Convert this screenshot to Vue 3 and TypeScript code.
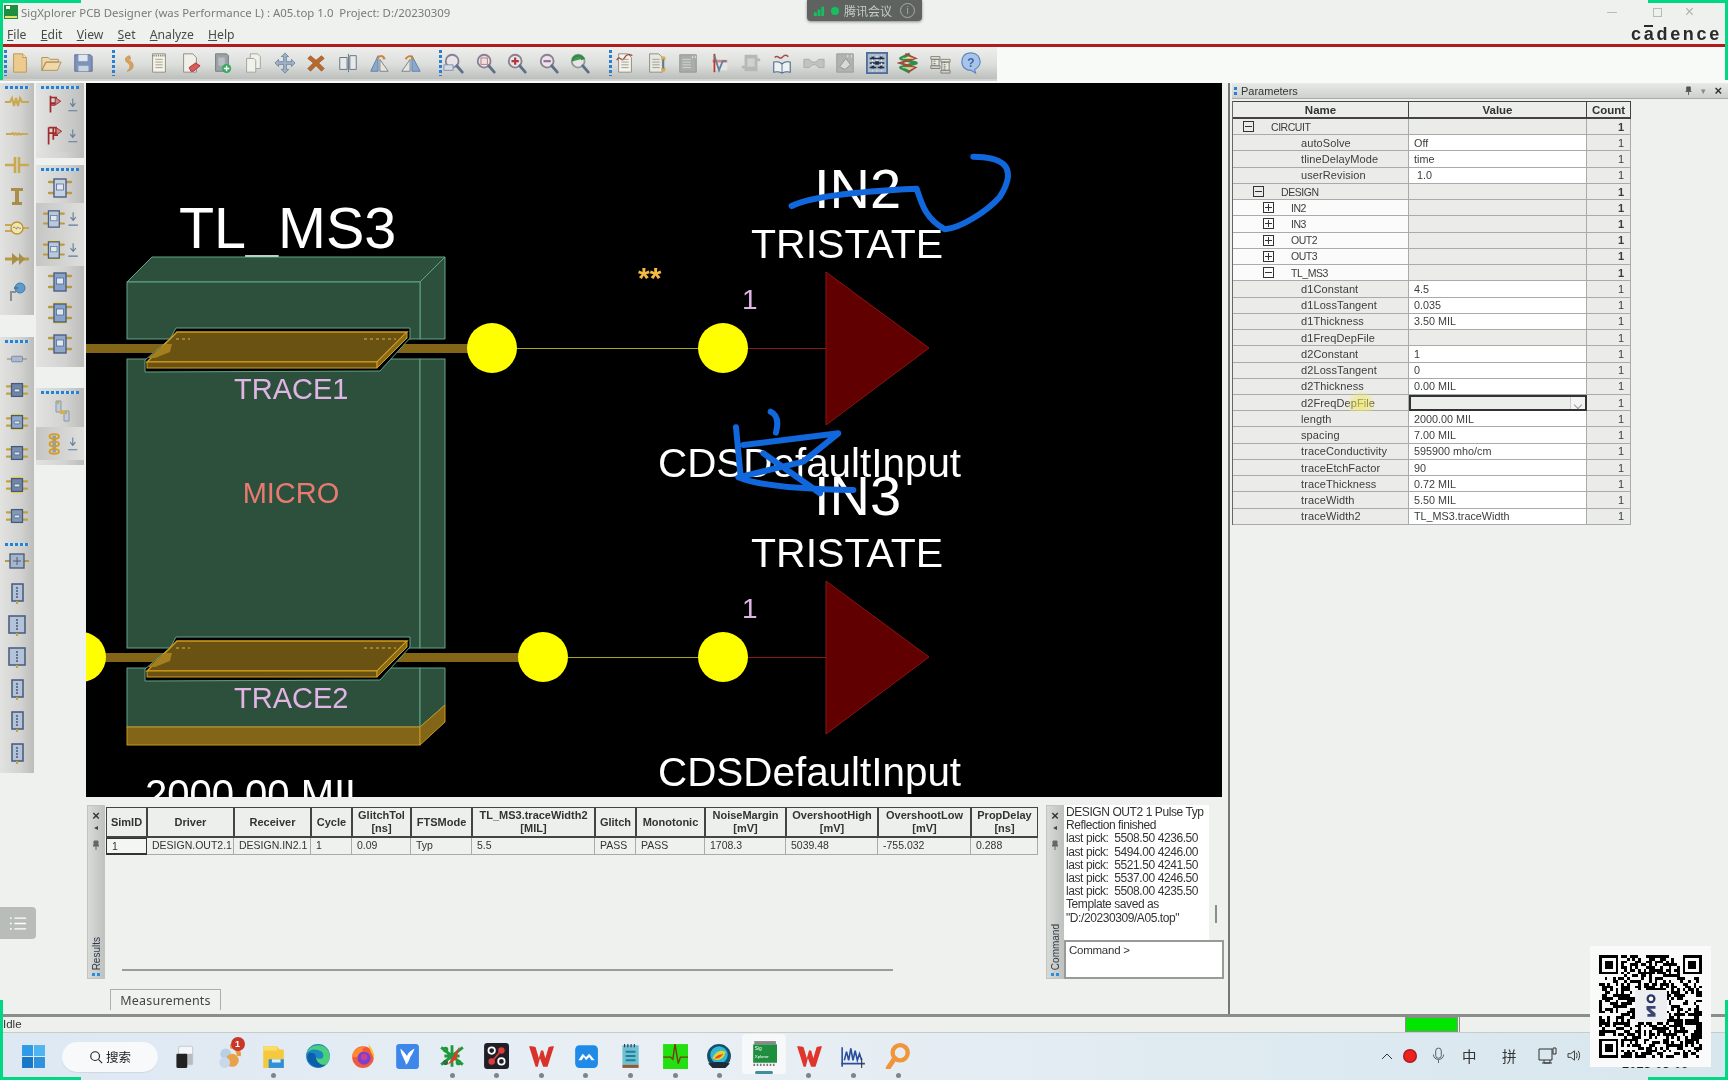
<script setup lang="ts">
const chipBlue = '#7d94b8'
const mag = (inner: string, c = '#8a7f92') =>
  `<circle cx="10" cy="10" r="7" fill="#e8e4e8" stroke="${c}" stroke-width="2"/><path d="M15 15l6 7" stroke="#5f6f8a" stroke-width="3" stroke-linecap="round"/>${inner}`
const doc = (extra = '', fill = '#f4f2ea', stroke = '#8a8a80') =>
  `<path d="M5 2h10l4 4v16H5z" fill="${fill}" stroke="${stroke}"/>${extra}`
const lines = '<path d="M8 8h8M8 11h8M8 14h8M8 17h8" stroke="#9a9a90"/>'

const toolbar: string[][] = [
  [
    '<path d="M5 2h10l4 4v16H5z" fill="#eccb8e" stroke="#b89558"/><path d="M15 2v4h4" fill="#f8e4b8" stroke="#b89558"/>',
    '<path d="M2 20V6h7l2 2h9v3H7L2 20l4-9h17l-4 9z" fill="#f0d8a8" stroke="#b08f5c"/>',
    `<path d="M3 3h17l2 2v16H3z" fill="${chipBlue}" stroke="#5d6f90"/><path d="M7 3h10v7H7z" fill="#dfe6f0"/><path d="M7 15h11v6H7z" fill="#c8d2e2"/>`
  ],
  [
    '<path d="M15 4C9 5 9 10 13 12c3 2 3 6-1 9 6-1 8-5 6-9-2-3-5-3-4-5l2 1z" fill="#d9a05e" stroke="#b9813d" stroke-width=".6"/>',
    '<path d="M5 2h14v20H5z" fill="#f5f3e6" stroke="#8a8a80"/><path d="M5 4h14" stroke="#777" stroke-dasharray="1 1" stroke-width="2"/>' + lines,
    doc('<path d="M11 17l7-5 5 3-7 6h-3z" fill="#d85a5a" stroke="#a33"/>', '#f0efea'),
    '<path d="M5 2h12l2 2v17H5z" fill="#9aa2a6" stroke="#6f777a"/><path d="M8 6h7v9H8z" fill="#b8bfc2"/><circle cx="17" cy="18" r="5" fill="#38a860"/><path d="M17 15v6M14 18h6" stroke="#fff" stroke-width="1.6"/>',
    '<path d="M9 2h8l3 3v13H9z" fill="#f1f1ec" stroke="#a0a09a"/><path d="M5 7h8l2 2v13H5z" fill="#f1f1ec" stroke="#a0a09a"/>',
    '<path d="M12 1l4 4h-2.500v5.500H19V8l4 4-4 4v-2.500h-5.500V19H16l-4 4-4-4h2.500v-5.500H5V16l-4-4 4-4v2.500h5.500V5H8z" fill="#9fb3c8" stroke="#5f7a94" stroke-width=".8"/>',
    '<path d="M6 4l6 5 6-5 3 3-6 5 6 6-3 3-6-6-6 6-3-3 6-6-6-5z" fill="#b9692c" stroke="#8a4a1b" stroke-width=".6"/>',
    '<path d="M3 6h8v13H3zM14 4h7v15h-7z" fill="#e8eaea" stroke="#5d6f7f"/><path d="M12.500 2v20" stroke="#5d6f7f"/>',
    '<path d="M3 21L11 4v17z" fill="#8aa7cc" stroke="#5f7fa8"/><path d="M13 21V8l9 13z" fill="#e8e4d8" stroke="#6f7f90"/><path d="M10 7c3-4 7-3 8 0l-2 0" fill="none" stroke="#c9853a" stroke-width="2"/>',
    '<path d="M2 21L11 8v13z" fill="#e8e4d8" stroke="#6f7f90"/><path d="M13 21V4l9 17z" fill="#8aa7cc" stroke="#5f7fa8"/><path d="M6 8c3-5 7-4 8-1l-2 0" fill="none" stroke="#c9853a" stroke-width="2"/>'
  ],
  [
    mag('<path d="M1 20h10v-6H1z" fill="#d5dbe4" stroke="#7f8fa8"/>'),
    mag('<rect x="6.500" y="6.500" width="7" height="7" fill="#f0dede" stroke="#b07a7a"/>'),
    mag('<path d="M10 6v8M6 10h8" stroke="#b03a3a" stroke-width="2.400"/>'),
    mag('<path d="M6 10h8" stroke="#9a6a9a" stroke-width="2.400"/>'),
    mag('<path d="M4 10c0-6 8-8 12-3l-3 1" fill="#3f9a55" stroke="#2f8a45" stroke-width="2"/>', '#8a9f92')
  ],
  [
    doc('<path d="M3 9c3-7 5 3 8-2s5-5 9-3" fill="none" stroke="#a84a4a" stroke-width="1.500"/>' + lines),
    doc('<circle cx="20" cy="7" r="2.500" fill="#d9ad4a"/><circle cx="20" cy="19" r="2.500" fill="#d9ad4a"/><path d="M20 8v10" stroke="#5f7a94" stroke-width="2"/>' + lines, '#e8e8e2'),
    '<path d="M3 3h18v19H3z" fill="#a8adab" stroke="#8f9492"/><path d="M6 8h9M6 11h9M6 14h9M6 17h9" stroke="#d5d8d6"/><path d="M17 4v3M20 4v3" stroke="#e5e5e5"/>',
    '<path d="M5 4h16v16H5z" fill="#e8e6e0"/><path d="M5 10h16" stroke="#d98a7a" stroke-width="3"/><path d="M7 2v20" stroke="#c0392b" stroke-width="2"/><path d="M7 4l5 16 4-10 4 0" fill="none" stroke="#5f7fa8" stroke-width="2"/>',
    '<path d="M5 3h14v4h3v3h-3v11H5v-3H2v-3h3z" fill="#b5b8b6"/><path d="M8 7h8v9H8z" fill="#d0d2d0"/>',
    '<path d="M4 6c4-4 5 3 8 0s4-3 7-1" fill="none" stroke="#a84a4a" stroke-width="1.600"/><path d="M3 11c4-1 7 0 9 2 2-2 5-3 9-2v11c-4-1-7 0-9 1-2-1-5-2-9-1z" fill="#eef0f2" stroke="#4f6a8a" stroke-width="1.200"/><path d="M12 13v10" stroke="#4f6a8a"/>',
    '<path d="M1 8h6l3 3h4l3-3h6v9h-6l-3-3h-4l-3 3H1z" fill="#c0c3c1" stroke="#a8aba9"/>',
    '<path d="M3 2h18v20H3z" fill="#b0b3b1" stroke="#999"/><path d="M6 16l7-9 5 7-6 5z" fill="#d8dad8" stroke="#8f9290"/><path d="M15 3v3M19 3v3" stroke="#e5e5e5"/>',
    '<path d="M0 0h24v24H0z" fill="#4f6f9a"/><path d="M2 2h20v20H2z" fill="#aebccc"/><path d="M4 7h16M4 12h16M4 17h16" stroke="#1f2f44" stroke-width="1.600"/><path d="M7 4v17M12 4v17M17 4v17" stroke="#fff" stroke-width="1" stroke-dasharray="2 2"/><path d="M6 5h3v3H6zM15 5h3v3h-3zM10 10h4v4h-4zM6 15h3v3H6zM15 15h3v3h-3z" fill="#1f2f44"/>',
    '<path d="M14 2L4 7l17 5L4 17l10 5" fill="none" stroke="#2d8f4d" stroke-width="3.400" stroke-linejoin="round"/><path d="M9 2l11 5L3 12l17 5-8 5" fill="none" stroke="#a8473a" stroke-width="2"/><path d="M6 7h12M6 17h12" stroke="#d9c36a" stroke-width="1.400"/>',
    '<path d="M2 5h10v3H2zM13 8h10v3H13zM3 8h8v7H3zM14 11h8v9h-8z" fill="#e8e6da" stroke="#7f7f78"/><path d="M2 15h10v3H2zM13 20h10v3H13z" fill="#d0cfc4" stroke="#7f7f78"/><path d="M6 8v7M17 11v9" stroke="#777" stroke-width="2" stroke-dasharray="1 1"/>',
    '<path d="M12 1C5 1 2 5 2 11c0 6 5 9 10 9l5 3-1-4c4-2 6-5 6-8 0-6-4-10-10-10z" fill="#a7c4ea" stroke="#5f85bd" stroke-width="1.200"/><text x="12" y="16" text-anchor="middle" font-family="Liberation Sans" font-size="13" font-weight="700" fill="#3f64a0">?</text>'
  ]
]

const gold = '#c3a13b'
const boxI = (band = false, inner = '#8fa7cc') =>
  `${band ? '<path d="M6 3h12v18H6z" fill="#e6cf56"/>' : ''}<path d="M1 8h4M1 16h4M19 8h4M19 16h4" stroke="${gold}" stroke-width="2.400" stroke-linecap="round"/><rect x="6" y="5" width="12" height="14" fill="${inner}" stroke="#46597a" stroke-width="1.400"/><path d="M9 11h6v3H9z" fill="#dfe7f2" stroke="#46597a" stroke-width=".7"/>`
const tallI = (w = false) =>
  `<rect x="${w ? 4 : 7}" y="3" width="${w ? 16 : 11}" height="17" fill="#b4c3d8" stroke="#4c5f80" stroke-width="1.600"/><path d="M12 6v11" stroke="#5f7294" stroke-dasharray="2 1" stroke-width="2"/><path d="M12 20v3" stroke="${gold}" stroke-width="2"/>`
const arrowDown = '<path d="M12 2v11M8 9l4 5 4-5M5 21h14" fill="none" stroke="#5b7c9f" stroke-width="1.600"/>'

const colA1 = [
  '<path d="M0 12h5l2-4 2 8 2-8 2 8 2-8 2 4h7" fill="none" stroke="#c9a850" stroke-width="2"/>',
  '<path d="M1 13h6c1-4 2 3 3 0s2 3 3 0 2 3 3 0h7" fill="none" stroke="#c9a850" stroke-width="1.800"/>',
  '<path d="M0 12h9M15 12h9" stroke="#c9a850" stroke-width="2.400"/><path d="M10 4v16M14 4v16" stroke="#c9a850" stroke-width="2.600"/>',
  '<path d="M6 4h12v3h-4v11h3v3H7v-3h3V7H6z" fill="#a88e48"/>',
  '<path d="M0 9h6M0 15h6M18 12h6" stroke="#c9a850" stroke-width="2"/><circle cx="12" cy="12" r="6" fill="#f3e6ad" stroke="#b8963e" stroke-width="1.400"/><path d="M8 12c2-3 3 3 4 0s2 2 4 0" fill="none" stroke="#777"/>',
  '<path d="M0 12h24" stroke="#b89a40" stroke-width="3"/><path d="M7 6l7 6-7 6zM14 6l6 6-6 6z" fill="#a88e48"/>',
  '<path d="M6 22V13h5" fill="none" stroke="#8b8f92" stroke-width="2"/><circle cx="15" cy="9" r="5" fill="#5f9ac8" stroke="#3f7aa8"/><path d="M9 9h4" stroke="#3f7aa8" stroke-width="2"/>'
]
const colA2 = [
  '<path d="M1 12h22" stroke="#9a9a7a" stroke-width="1.400"/><rect x="6" y="9" width="12" height="6" rx="1" fill="#aab8d0" stroke="#7686a2"/>',
  boxI(false, '#6f86a8'), boxI(true, '#8fa7cc'), boxI(false, '#7a90b2'), boxI(true, '#6f86a8'), boxI(false, '#8298b8')
]
const colA3 = [
  '<path d="M0 12h5M19 12h5" stroke="#b49a46" stroke-width="2"/><rect x="5" y="5" width="14" height="14" fill="#a7b5cb" stroke="#4c5f80" stroke-width="1.400"/><path d="M8 12h8M12 8v8" stroke="#4c5f80"/>',
  tallI(), tallI(true), tallI(true), tallI(), tallI(), tallI()
]
const colB1 = [
  '<path d="M8 2v18M8 4h6v6H8M8 12h5" fill="none" stroke="#9e2b2b" stroke-width="1.800"/><path d="M13 4l6 4-6 4z" fill="#c98a8a" stroke="#9e2b2b"/>',
  '<path d="M6 3v18M11 3v13M6 3h8v6H6M11 11h5" fill="none" stroke="#a32a2a" stroke-width="1.800"/><path d="M14 3l6 4-6 4z" fill="#c98a8a" stroke="#a32a2a"/>'
]
const bigChip = (band = false) =>
  `${band ? '<path d="M5 1h14v22H5z" fill="#e8d35c" opacity=".8"/>' : ''}<path d="M1 6h5M1 17h5M18 6h5M18 17h5" stroke="#b99a42" stroke-width="2.400" stroke-linecap="round"/><rect x="6" y="3" width="12" height="18" fill="#88a4cc" stroke="#4c5f80" stroke-width="1.400"/><rect x="8.500" y="8" width="7" height="6" fill="#dfe7f2" stroke="#4c5f80" stroke-width=".7"/>`
const colB2: { i: string; arrow: boolean; dark: boolean }[] = [
  { i: bigChip().replace('#88a4cc', '#c4d2e4'), arrow: false, dark: false },
  { i: bigChip().replace('#88a4cc', '#b9c8dd'), arrow: true, dark: true },
  { i: bigChip(true).replace('#88a4cc', '#b9c8dd'), arrow: true, dark: true },
  { i: bigChip(), arrow: false, dark: false },
  { i: bigChip(true), arrow: false, dark: false },
  { i: bigChip().replace('#88a4cc', '#92a8c8'), arrow: false, dark: false }
]
const colB3a = '<path d="M8 2h5v11H8zM16 12h5v10h-5z" fill="#bfcbd8" stroke="#8898a8"/><path d="M10 2v3M18 12v3" stroke="#c9a94a" stroke-width="2"/><ellipse cx="14" cy="13" rx="3" ry="2" fill="#d4b04e"/>'
const colB3b = '<path d="M12 3v18" stroke="#8ba0b8" stroke-width="4"/><ellipse cx="12" cy="4" rx="5" ry="2.500" fill="none" stroke="#d79b1e" stroke-width="2"/><ellipse cx="12" cy="12" rx="5" ry="2.500" fill="none" stroke="#d79b1e" stroke-width="2"/><ellipse cx="12" cy="20" rx="5" ry="2.500" fill="none" stroke="#d79b1e" stroke-width="2"/>'

interface Row { name: string; value: string; level: number; box: string; group: boolean; white: boolean; edit: boolean }
const leaf = (name: string, value: string, edit = true): Row => ({ name, value, level: 3, box: '', group: false, white: false, edit })
const grp = (name: string, level: number, box: string, white: boolean): Row => ({ name, value: '', level, box, group: true, white, edit: false })
const rows: Row[] = [
  grp('CIRCUIT', 0, '-', false),
  leaf('autoSolve', 'Off'), leaf('tlineDelayMode', 'time'), leaf('userRevision', ' 1.0'),
  grp('DESIGN', 1, '-', false),
  grp('IN2', 2, '+', true), grp('IN3', 2, '+', true), grp('OUT2', 2, '+', true), grp('OUT3', 2, '+', true), grp('TL_MS3', 2, '-', true),
  leaf('d1Constant', '4.5'), leaf('d1LossTangent', '0.035'), leaf('d1Thickness', '3.50 MIL'), leaf('d1FreqDepFile', '', false),
  leaf('d2Constant', '1'), leaf('d2LossTangent', '0'), leaf('d2Thickness', '0.00 MIL'), leaf('d2FreqDepFile', '', false),
  leaf('length', '2000.00 MIL'), leaf('spacing', '7.00 MIL'), leaf('traceConductivity', '595900 mho/cm'), leaf('traceEtchFactor', '90'),
  leaf('traceThickness', '0.72 MIL'), leaf('traceWidth', '5.50 MIL'), leaf('traceWidth2', 'TL_MS3.traceWidth')
]

const measure: { h: string[]; v: string }[] = [
  { h: ['SimID'], v: '1' }, { h: ['Driver'], v: 'DESIGN.OUT2.1' }, { h: ['Receiver'], v: 'DESIGN.IN2.1' }, { h: ['Cycle'], v: '1' },
  { h: ['GlitchTol', '[ns]'], v: '0.09' }, { h: ['FTSMode'], v: 'Typ' }, { h: ['TL_MS3.traceWidth2', '[MIL]'], v: '5.5' },
  { h: ['Glitch'], v: 'PASS' }, { h: ['Monotonic'], v: 'PASS' }, { h: ['NoiseMargin', '[mV]'], v: '1708.3' },
  { h: ['OvershootHigh', '[mV]'], v: '5039.48' }, { h: ['OvershootLow', '[mV]'], v: '-755.032' }, { h: ['PropDelay', '[ns]'], v: '0.288' }
]

const logLines = ['DESIGN OUT2 1 Pulse Typ', 'Reflection finished', 'last pick:  5508.50 4236.50', 'last pick:  5494.00 4246.00',
  'last pick:  5521.50 4241.50', 'last pick:  5537.00 4246.50', 'last pick:  5508.00 4235.50', 'Template saved as', '"D:/20230309/A05.top"']

const menus = ['File', 'Edit', 'View', 'Set', 'Analyze', 'Help']

const task: { i: string; dot: boolean; active?: boolean; badge?: boolean }[] = [
  { i: '<rect x="7" y="3" width="13" height="17" rx="1.500" fill="#f4f6f8" stroke="#c8ccd0"/><path d="M12 10h8v10h-8z" fill="#b8bcc0"/><rect x="5" y="10" width="10" height="13" rx="1" fill="#222"/>', dot: false },
  { i: '<circle cx="9" cy="10" r="5" fill="#b8cfe4"/><path d="M13 3a8 8 0 0 1 8 9" stroke="#e89a3a" stroke-width="4" fill="none"/><circle cx="15" cy="16" r="6" fill="#e8a24a"/><circle cx="8" cy="18" r="5" fill="#c8d8ea"/>', dot: false, badge: true },
  { i: '<path d="M3 3h13l2 3h4v17H3z" fill="#f5c93c"/><path d="M3 3h13v4H3z" fill="#f9dd6a"/><path d="M8 15h14v8H8z" fill="#2f8fd8"/><path d="M11 15h8v3h-8z" fill="#dcefff"/>', dot: true },
  { i: '<circle cx="12" cy="12" r="11" fill="#1b86c8"/><path d="M23 13c0-7-5-11-11-11C7 2 3 5 1 10c3-4 8-5 12-3 4 1 5 5 3 7-2 1-6 1-6-2-2 5 2 9 7 9 3 0 5-3 6-8z" fill="#4ccf7a"/><path d="M10 12c0 5 4 9 9 8-3 3-11 4-15-2-3-4-2-7 0-9 2 0 5 0 6 3z" fill="#0b5ea8"/>', dot: false },
  { i: '<circle cx="12" cy="13" r="10" fill="#f05a3a"/><path d="M17 1c3 4 6 8 5 14-1-5-4-7-5-14z" fill="#ffbf2f"/><path d="M2 13C3 5 9 3 14 4c-3 1-3 3-2 4-3 0-4 2-5 5z" fill="#ff8a2f"/><circle cx="13" cy="14" r="6" fill="#7a3fd0"/><circle cx="13" cy="13" r="3" fill="#c4409a"/>', dot: false },
  { i: '<rect x="2" y="1" width="21" height="23" rx="3" fill="#3d86ea"/><path d="M6 5c3 3 5 5 6 7 1-3 3-5 7-7-1 3-2 5-4 8-1 3-2 6-4 7 0-4-5-9-5-15z" fill="#fff"/>', dot: false },
  { i: '<path d="M2 4l20 16M2 20L22 4M5 12h14M12 2v20" stroke="#1e9a3a" stroke-width="2.600"/><circle cx="6" cy="6" r="2.600" fill="#1e9a3a"/><circle cx="18" cy="18" r="2.600" fill="#1e9a3a"/><path d="M8 20L19 3l-3 12z" fill="#e23a2a"/><circle cx="6" cy="18" r="2.400" fill="#2f6f3f"/>', dot: true },
  { i: '<rect x="1" y="0" width="23" height="24" rx="3" fill="#1f1f28"/><circle cx="8" cy="7" r="3" fill="none" stroke="#fff" stroke-width="1.600"/><circle cx="17" cy="7" r="3" fill="#e03a3a"/><circle cx="8" cy="17" r="3" fill="#e03a3a"/><circle cx="17" cy="17" r="3" fill="none" stroke="#fff" stroke-width="1.600"/><path d="M15 9l-5 6" stroke="#e03a3a" stroke-width="1.500"/>', dot: true },
  { i: '<path d="M1 3c3 0 5 0 6 1l3 10 2-7h2l2 7 3-10c1-1 3-1 5-1l-6 19h-4l-3-8-2 8H7z" fill="#d8322a"/>', dot: true },
  { i: '<rect x="2" y="2" width="21" height="21" rx="4" fill="#1f8ae8"/><path d="M5 16l4-6 3 3 3-3 5 6h-3l-2-3-3 3-2-3-2 3z" fill="#fff"/>', dot: true },
  { i: '<rect x="5" y="2" width="15" height="18" fill="#6fc0d0"/><path d="M5 20h15v3H5z" fill="#8a5f3a"/><path d="M8 8h9M8 12h9M8 16h9" stroke="#1f7f98" stroke-width="1.800"/><path d="M7 1v3M10 1v3M13 1v3M16 1v3" stroke="#235" stroke-width="1"/>', dot: true },
  { i: '<rect x="1" y="1" width="23" height="23" fill="#23e010"/><path d="M1 13h7l2 2 2-14 3 18 2-6h7" fill="none" stroke="#7a3a10" stroke-width="1.300"/>', dot: true },
  { i: '<circle cx="12" cy="12" r="11" fill="#14506a"/><circle cx="12" cy="11" r="8" fill="#30b8d8"/><path d="M6 14c3-7 8-8 12-6-1 6-6 10-12 6z" fill="#e8d02a"/><path d="M8 14c3-3 5-3 8-4-2 3-4 5-8 4z" fill="#e84a2a"/><path d="M2 19c5-2 15-2 20 0l-4 4H6z" fill="#1c2a3a"/>', dot: true },
  { i: '<rect x="3" y="1" width="20" height="3" fill="#888"/><rect x="2" y="4" width="22" height="17" fill="#1f8f3f"/><text x="3.500" y="9" font-family="Liberation Sans" font-size="4.500" fill="#fff">Sig</text><text x="3.500" y="17" font-family="Liberation Sans" font-size="4" fill="#fff">Xplorer</text><path d="M3 22v2M6 22v2M9 22v2M12 22v2M15 22v2M18 22v2M21 22v2" stroke="#777" stroke-width="1.500"/>', dot: false, active: true },
  { i: '<path d="M1 3c3 0 5 0 6 1l3 10 2-7h2l2 7 3-10c1-1 3-1 5-1l-6 19h-4l-3-8-2 8H7z" fill="#e0352c"/>', dot: true },
  { i: '<path d="M2 22V4M1 19h22M4 16l2-8 2 8 2-11 2 11 2-9 2 9 2-6 2 6" fill="none" stroke="#2b4f9e" stroke-width="1.500"/><path d="M20 14v9" stroke="#333"/>', dot: true },
  { i: '<circle cx="14" cy="9" r="7" fill="none" stroke="#f0953a" stroke-width="4"/><path d="M9 14L3 23" stroke="#f0953a" stroke-width="4.500" stroke-linecap="round"/>', dot: true }
]

// decorative QR pattern from a fixed seed
const N = 37
const qrPath = (() => {
  let s = 20230309
  const rnd = () => ((s = (s * 1103515245 + 12345) & 0x7fffffff) >> 8) % 100
  let d = ''
  const inFinder = (x: number, y: number) => (x < 8 && y < 8) || (x >= N - 8 && y < 8) || (x < 8 && y >= N - 8)
  for (let y = 0; y < N; y++) for (let x = 0; x < N; x++) {
    if (inFinder(x, y)) continue
    if (rnd() < 52) d += `M${x} ${y}h1v1h-1z`
  }
  const finder = (fx: number, fy: number) => {
    d += `M${fx} ${fy}h7v7h-7zM${fx + 1} ${fy + 1}v5h5v-5zM${fx + 2} ${fy + 2}h3v3h-3z`
  }
  finder(0, 0); finder(N - 7, 0); finder(0, N - 7)
  return d
})()
</script>

<template>
  <div class="app">
    <header class="title-bar">
      <svg class="app-ico" viewBox="0 0 14 14"><rect width="14" height="14" fill="#1f8f3f" /><rect x="2" y="1" width="4" height="3" fill="#fff" /><path d="M1 12h12" stroke="#e8e060" stroke-width="2" /></svg>
      <span class="title-text">SigXplorer PCB Designer (was Performance L) : A05.top 1.0&nbsp; Project: D:/20230309</span>
      <div class="win-btns">
        <span class="wb-min"></span><span class="wb-max"></span><span class="wb-x">×</span>
      </div>
    </header>
    <nav class="menu-bar">
      <span v-for="m in menus" :key="m" class="menu"><u>{{ m[0] }}</u>{{ m.slice(1) }}</span>
      <span class="cadence">cadence</span>
    </nav>
    <div class="red-line"></div>
    <div class="toolbar-row">
      <div class="toolbar">
        <div v-for="(g, gi) in toolbar" :key="gi" class="tool-group">
          <i class="grip"></i>
          <span v-for="(ic, k) in g" :key="k" class="tool"><svg viewBox="0 0 24 24" width="22" height="22" v-html="ic"></svg></span>
        </div>
      </div>
    </div>

    <main class="main">
      <aside class="palette">
        <div class="pal-col-a">
          <section class="pal pal-a1">
            <i class="pal-dots"></i>
            <span v-for="(ic, k) in colA1" :key="k" class="pal-i"><svg viewBox="0 0 24 24" width="24" height="24" v-html="ic"></svg></span>
          </section>
          <section class="pal pal-a2">
            <i class="pal-dots"></i>
            <span v-for="(ic, k) in colA2" :key="k" class="pal-i"><svg viewBox="0 0 24 24" width="22" height="22" v-html="ic"></svg></span>
          </section>
          <section class="pal pal-a3">
            <i class="pal-dots"></i>
            <span v-for="(ic, k) in colA3" :key="k" class="pal-i"><svg viewBox="0 0 24 24" width="24" height="24" v-html="ic"></svg></span>
          </section>
        </div>
        <div class="pal-col-b">
          <section class="pal pal-b1">
            <i class="pal-dots"></i>
            <span v-for="(ic, k) in colB1" :key="k" class="pal-r">
              <svg viewBox="0 0 24 24" width="26" height="26" v-html="ic"></svg>
              <svg viewBox="0 0 24 24" width="18" height="22" v-html="arrowDown"></svg>
            </span>
          </section>
          <section class="pal pal-b2">
            <i class="pal-dots"></i>
            <span v-for="(r, k) in colB2" :key="k" class="pal-r" :class="{ 'pal-dark': r.dark, 'pal-c': !r.arrow }">
              <svg viewBox="0 0 24 24" width="24" height="24" v-html="r.i"></svg>
              <svg v-if="r.arrow" viewBox="0 0 24 24" width="18" height="22" v-html="arrowDown"></svg>
            </span>
          </section>
          <section class="pal pal-b3">
            <i class="pal-dots"></i>
            <span class="pal-r pal-c"><svg viewBox="0 0 24 24" width="24" height="24" v-html="colB3a"></svg></span>
            <span class="pal-r pal-dark">
              <svg viewBox="0 0 24 24" width="26" height="26" v-html="colB3b"></svg>
              <svg viewBox="0 0 24 24" width="18" height="22" v-html="arrowDown"></svg>
            </span>
          </section>
        </div>
      </aside>

      <div class="center">
        <svg class="canvas" viewBox="86 83 1136 714" width="1136" height="714" xmlns="http://www.w3.org/2000/svg">
          <rect x="86" y="83" width="1136" height="714" fill="#000" />
          <text x="179" y="248" class="t-w" font-size="57.500">TL_MS3</text>
          <g fill="#2c503c" stroke="#62a488" stroke-width="1">
            <polygon points="127,282 152,257 445,257 420,282" />
            <polygon points="420,282 445,257 445,339 420,339" />
            <rect x="127" y="282" width="293" height="57" />
            <rect x="127" y="359" width="293" height="289" />
            <rect x="420" y="359" width="25" height="289" />
            <rect x="127" y="668" width="293" height="59" />
            <polygon points="420,668 445,668 445,705 420,727" />
          </g>
          <rect x="127" y="727" width="293" height="18" fill="#836518" stroke="#c8971e" />
          <polygon points="420,727 445,705 445,722 420,745" fill="#836518" stroke="#c8971e" />

          <rect x="86" y="344" width="400" height="9" fill="#836518" />
          <rect x="86" y="653" width="450" height="9" fill="#836518" />

          <g v-for="dy in [0, 309]" :key="dy" :transform="`translate(0 ${dy})`">
            <polygon points="176,328 410,328 410,338 380,371 145,372 145,360 170,339" fill="#000" stroke="#62a488" />
            <polygon points="177,332 407,332 377,362 147,362" fill="#6a5312" stroke="#d39c1e" stroke-width="1.400" />
            <rect x="147" y="362" width="230" height="6" fill="#6a5312" stroke="#d39c1e" />
            <polygon points="377,362 407,332 407,338 377,368" fill="#8a6c18" stroke="#d39c1e" />
            <polygon points="148,358 165,344 172,344 170,352 155,358" fill="#a57f1d" />
            <path d="M176 339h14M364 339h32" stroke="#d8b040" stroke-dasharray="3 3" />
            <text x="234" y="399" class="t-p" font-size="29">{{ dy ? 'TRACE2' : 'TRACE1' }}</text>
            <polygon points="826,272 929,348 826,425" fill="#600000" stroke="#8a1414" />
            <line x1="748" y1="348.500" x2="826" y2="348.500" stroke="#8a1a1a" />
            <circle cx="723" cy="348" r="25" fill="#ffff00" />
            <text x="742" y="309" class="t-p" font-size="28">1</text>
            <text x="751" y="258" class="t-w" font-size="41">TRISTATE</text>
          </g>

          <line x1="517" y1="348.500" x2="698" y2="348.500" stroke="#a8a820" />
          <line x1="568" y1="657.500" x2="698" y2="657.500" stroke="#a8a820" />
          <circle cx="492" cy="348" r="25" fill="#ffff00" />
          <circle cx="543" cy="657" r="25" fill="#ffff00" />
          <circle cx="81" cy="657" r="25" fill="#ffff00" />

          <text x="638" y="288" font-size="30" font-weight="700" fill="#f4b942" font-family="Liberation Sans, sans-serif">**</text>
          <text x="291" y="503" text-anchor="middle" font-size="29" fill="#e87a72" font-family="Liberation Sans, sans-serif">MICRO</text>

          <text x="814" y="208" class="t-w" font-size="56">IN2</text>
          <text x="814" y="515" class="t-w" font-size="56">IN3</text>
          <text x="658" y="477" class="t-w" font-size="40.400">CDSDefaultInput</text>
          <text x="658" y="786" class="t-w" font-size="40.400">CDSDefaultInput</text>
          <text x="145" y="808" class="t-w" font-size="40">2000.00 MIL</text>

          <g transform="translate(650 140) scale(.3333)" fill="none" stroke="#1168dc" stroke-width="18" stroke-linecap="round" stroke-linejoin="round">
            <path d="M425 198C480 170 600 155 800 146C815 190 825 235 885 268C930 265 1010 215 1050 170C1075 130 1085 95 1060 72C1040 55 1000 50 970 50" />
            <path d="M258 862L272 1010M280 915L565 880L460 965L265 1012C330 1040 480 1048 610 1050M340 940L510 1060M362 815C385 825 385 850 378 878" />
          </g>
        </svg>

        <div class="lower">
          <section class="results">
            <div class="strip">
              <span class="s-x">×</span><span class="s-l">◂</span>
              <svg class="s-pin" viewBox="0 0 10 10" width="10" height="10"><path d="M3 1h4v4l1 1H2l1-1zM5 6v4" fill="#666" stroke="#666" /></svg>
              <span class="s-label">Results</span>
              <i class="s-dots"></i>
            </div>
            <div class="res-body">
              <div class="res-grid">
                <div v-for="(c, i) in measure" :key="i" class="res-h"><span v-for="l in c.h" :key="l">{{ l }}</span></div>
                <div v-for="(c, i) in measure" :key="'v' + i" class="res-v" :class="{ 'res-focus': i === 0 }">{{ c.v }}</div>
              </div>
              <div class="res-scroll"></div>
            </div>
          </section>
          <section class="command">
            <div class="strip">
              <span class="s-x">×</span><span class="s-l">◂</span>
              <svg class="s-pin" viewBox="0 0 10 10" width="10" height="10"><path d="M3 1h4v4l1 1H2l1-1zM5 6v4" fill="#666" stroke="#666" /></svg>
              <span class="s-label">Command</span>
              <i class="s-dots"></i>
            </div>
            <div class="cmd-body">
              <div class="cmd-top">
                <div class="log">
                  <div v-for="(l, i) in logLines" :key="i" class="log-line">{{ l }}</div>
                </div>
                <i class="log-scroll"></i>
              </div>
              <div class="cmd-input">Command &gt;</div>
            </div>
          </section>
        </div>

        <div class="tabs"><span class="tab">Measurements</span></div>
      </div>

      <aside class="params">
        <div class="par-head">
          <i class="par-grip"></i><span class="par-title">Parameters</span>
          <span class="par-btns">
            <svg viewBox="0 0 10 10" width="9" height="9"><path d="M3 1h4v4l1 1H2l1-1zM5 6v4" fill="#555" stroke="#555" /></svg>
            <span class="par-down">▾</span><b>×</b>
          </span>
        </div>
        <div class="par-table">
          <div class="ph">Name</div><div class="ph">Value</div><div class="ph">Count</div>
          <template v-for="r in rows" :key="r.name">
            <div class="pc pc-name" :class="{ 'pc-white': r.white, [`lv${r.level}`]: true }">
              <span v-if="r.box" class="tree-box" :class="{ plus: r.box === '+' }"></span>
              <span :class="{ up: r.group }">{{ r.name }}</span>
            </div>
            <div class="pc pc-val" :class="{ 'pc-edit': r.edit, 'pc-sel': r.name === 'd2FreqDepFile' }">
              {{ r.value }}
              <span v-if="r.name === 'd2FreqDepFile'" class="combo"></span>
              <span v-if="r.name === 'd2FreqDepFile'" class="cursor-halo"></span>
            </div>
            <div class="pc pc-count" :class="{ strong: r.group }">1</div>
          </template>
        </div>
      </aside>
    </main>

    <footer class="status">
      <span class="idle">Idle</span>
      <i class="st-green"></i>
      <i class="st-sep"></i>
    </footer>

    <div class="taskbar">
      <svg class="start" viewBox="0 0 24 24" width="25" height="25"><path d="M1 1h10.500v10.500H1z" fill="#2f9be8" /><path d="M12.500 1H23v10.500H12.500z" fill="#4fb4f0" /><path d="M1 12.500h10.500V23H1z" fill="#1778c8" /><path d="M12.500 12.500H23V23H12.500z" fill="#2f90dc" /></svg>
      <div class="search">
        <svg viewBox="0 0 16 16" width="14" height="14"><circle cx="7" cy="7" r="5" fill="none" stroke="#222" stroke-width="1.300" /><path d="M11 11l4 4" stroke="#222" stroke-width="1.300" /></svg>
        <span>搜索</span>
      </div>
      <div class="task-items">
        <div v-for="(t, k) in task" :key="k" class="ti" :class="{ on: t.active, dotted: t.dot }">
          <svg viewBox="0 0 24 24" width="26" height="26" v-html="t.i"></svg>
          <b v-if="t.badge" class="badge">1</b>
        </div>
      </div>
      <div class="tray">
        <svg class="tr-up" viewBox="0 0 12 8" width="12" height="8"><path d="M1 7l5-5 5 5" fill="none" stroke="#333" /></svg>
        <i class="rec"></i>
        <svg class="tr-mic" viewBox="0 0 14 18" width="13" height="17"><rect x="4" y="1" width="6" height="11" rx="3" fill="none" stroke="#555" /><path d="M1.500 8c0 7 11 7 11 0M7 14v3" fill="none" stroke="#555" /></svg>
        <span class="tr-zh">中</span>
        <span class="tr-py">拼</span>
        <svg class="tr-net" viewBox="0 0 20 18" width="20" height="18"><path d="M1 2h13v11H1zM6 13v3h6v-3M4 16h10" fill="none" stroke="#333" /><path d="M15 1h3v6h-3z" fill="none" stroke="#333" /></svg>
        <svg class="tr-vol" viewBox="0 0 16 14" width="15" height="13"><path d="M1 5h3l4-3v10L4 9H1z" fill="none" stroke="#333" /><path d="M10 4c1 2 1 4 0 6M12 2c2 3 2 7 0 10" fill="none" stroke="#333" /></svg>
        <span class="tr-date">2023-03-09</span>
      </div>
    </div>

    <button class="chat-btn" aria-label="list">
      <svg viewBox="0 0 20 16" width="18" height="15"><path d="M6 2h13M6 8h13M6 14h13" stroke="#fff" stroke-width="1.500" /><circle cx="2" cy="2" r="1" fill="#fff" /><circle cx="2" cy="8" r="1" fill="#fff" /><circle cx="2" cy="14" r="1" fill="#fff" /></svg>
    </button>

    <div class="meeting">
      <svg viewBox="0 0 14 12" width="13" height="11"><path d="M1 8h3v4H1zM5 5h3v7H5zM9 2h3v10H9z" fill="#16c060" /></svg>
      <i class="m-dot"></i>
      <span>腾讯会议</span>
      <i class="m-info">i</i>
    </div>

    <div class="qr">
      <svg viewBox="0 0 37 37" width="103" height="103" shape-rendering="crispEdges"><path :d="qrPath" fill="#000" fill-rule="evenodd" /></svg>
      <div class="qr-center">
        <svg viewBox="0 0 20 28" width="18" height="26"><circle cx="10" cy="6" r="5" fill="#2c3560" /><circle cx="10" cy="6" r="2.500" fill="#fff" /><path d="M5 14h10v3H9l6 5v4H6v-3l4 0-5-5z" fill="#3a4472" /></svg>
      </div>
    </div>

    <i class="g g1"></i><i class="g g2"></i><i class="g g3"></i><i class="g g4"></i>
    <i class="g g5"></i><i class="g g6"></i><i class="g g7"></i><i class="g g8"></i>
  </div>
</template>

<style>
html, body { margin: 0; padding: 0; background: #eef1ee; overflow: hidden; }
</style>

<style scoped>
.app { position: relative; width: 1728px; height: 1080px; overflow: hidden; background: #eef1ee; font-family: "Liberation Sans", Arial, sans-serif; color: #222; filter: blur(.4px); }
.title-bar { height: 24px; display: flex; align-items: center; padding-left: 4px; box-sizing: border-box; }
.app-ico { width: 14px; height: 14px; margin-right: 3px; }
.title-text { font: 11.400px "Noto Sans", sans-serif; color: #777c78; white-space: pre; }
.win-btns { margin-left: auto; display: flex; align-items: center; color: #999; }
.wb-min { width: 10px; height: 1px; background: #b8bcb8; margin-right: 36px; }
.wb-max { width: 7px; height: 7px; border: 1px solid #b8bcb8; margin-right: 23px; }
.wb-x { font-size: 16px; margin-right: 34px; line-height: 1; color: #b0b4b0; }
.menu-bar { height: 20px; display: flex; align-items: center; padding-left: 7px; font: 12.200px "Noto Sans", sans-serif; color: #484c48; }
.menu { margin-right: 14.200px; }
.cadence { position: relative; margin-left: auto; margin-right: 6px; font: 700 18px "Liberation Sans", sans-serif; letter-spacing: 2.700px; color: #2a2a2a; }
.cadence::before { content: ""; position: absolute; left: 13px; top: 1px; width: 9px; height: 2px; background: #2a2a2a; }
.red-line { height: 3px; background: #b01c1c; box-shadow: 0 1px 0 #e8a0a0; }
.toolbar-row { height: 36px; background: #f8faf8; }
.toolbar { width: 997px; height: 34px; box-sizing: border-box; padding-left: 4px; display: flex; align-items: center; background: linear-gradient(180deg, #eeefed 0%, #dcdedb 55%, #bcbfbc 100%); border-bottom: 2px solid #d0d2d0; }
.tool-group { position: relative; display: flex; margin-right: 13px; }
.tool-group:nth-child(2) { margin-right: 12px; }
.tool { width: 31.500px; display: flex; justify-content: center; }
.grip { position: absolute; left: 0; top: -2px; width: 3px; height: 26px; background: repeating-linear-gradient(180deg, #2a7fd0 0 3px, transparent 3px 5px); }
.main { display: flex; height: 931px; }
.palette { width: 86px; display: flex; flex: none; }
.pal-col-a { width: 34px; display: flex; flex-direction: column; }
.pal-col-b { width: 48px; margin-left: 2px; display: flex; flex-direction: column; }
.pal { position: relative; display: flex; flex-direction: column; background: linear-gradient(90deg, #e2e3e1, #d2d3d1 60%, #bcbdbb); box-sizing: border-box; }
.pal-dots { height: 3px; margin: 3px 5px 0; background: repeating-linear-gradient(90deg, #2a7fd0 0 3px, #bfe0f2 3px 5px); flex: none; }
.pal-i { height: 31.500px; display: flex; align-items: center; justify-content: center; flex: none; }
.pal-a1 { height: 232px; }
.pal-a1 .pal-dots { margin-bottom: -3px; }
.pal-a2 { margin-top: 22px; height: 203px; }
.pal-a3 { height: 233px; }
.pal-a3 .pal-dots { margin-bottom: -1px; }
.pal-a3 .pal-i { height: 32px; }
.pal-r { height: 31.300px; display: flex; align-items: center; justify-content: space-between; padding: 0 3px 0 7px; flex: none; background: linear-gradient(90deg, #e4e4e2, #bfc0be); }
.pal-c { justify-content: center; padding: 0; background: none; }
.pal-dark { background: linear-gradient(90deg, #c6c7c5, #dedfdd); }
.pal-b1 { height: 75px; }
.pal-b1 .pal-dots { margin-bottom: 0; }
.pal-b2 { height: 202px; margin-top: 7px; }
.pal-b2 .pal-dots { margin-bottom: 1px; }
.pal-b3 { height: 77px; margin-top: 21px; }
.pal-b3 .pal-r { height: 33px; }
.center { width: 1144px; flex: none; box-sizing: border-box; border-right: 2px solid #777; }
.canvas { display: block; }
.t-w { fill: #fff; font-family: "Liberation Sans", sans-serif; }
.t-p { fill: #e0b4e4; font-family: "Liberation Sans", sans-serif; }
.lower { display: flex; height: 174px; margin-top: 8px; padding-left: 1px; }
.strip { width: 18px; flex: none; position: relative; display: flex; flex-direction: column; align-items: center; background: linear-gradient(90deg, #d8dad8, #bfc2bf); border: 1px solid #c0c3c0; box-sizing: border-box; }
.s-x { font: 700 13px/13px "Liberation Sans", sans-serif; margin-top: 3px; color: #333; }
.s-l { font-size: 8px; line-height: 12px; color: #444; }
.s-pin { margin-top: 6px; }
.s-label { position: absolute; bottom: 8px; writing-mode: vertical-rl; transform: rotate(180deg); font-size: 10px; color: #2c3a48; }
.s-dots { position: absolute; bottom: 2px; width: 8px; height: 3px; background: repeating-linear-gradient(90deg, #2a8fe0 0 3px, transparent 3px 5px); }
.results { width: 955px; display: flex; flex: none; margin-right: 4px; }
.res-body { position: relative; flex: 1; padding-top: 2px; }
.res-grid { display: grid; grid-template-columns: 41px 87px 77px 41px 59px 61px 123px 41px 69px 81px 92px 93px 67px; grid-template-rows: 31px 17px; margin-left: 1px; width: 932px; }
.res-h { display: flex; flex-direction: column; align-items: center; justify-content: center; background: #ecefec; border: 1px solid #444; border-left-width: 1px; border-bottom-width: 2px; box-sizing: border-box; font-weight: 700; font-size: 11px; line-height: 13px; color: #333; white-space: nowrap; overflow: hidden; }
.res-v { border-right: 1px solid #a8aca8; border-bottom: 1px solid #a8aca8; font-size: 10.500px; line-height: 15px; padding-left: 5px; box-sizing: border-box; color: #333; white-space: nowrap; }
.res-v:nth-child(14) { border-left: 1px solid #a8aca8; }
.res-focus { border: 1px solid #333 !important; border-bottom-width: 2px !important; background: #f4f6f4; }
.res-scroll { position: absolute; left: 17px; top: 164px; width: 771px; height: 2px; background: #9a9e9a; }
.command { display: flex; width: 178px; flex: none; }
.cmd-body { flex: 1; display: flex; flex-direction: column; }
.cmd-top { position: relative; height: 135px; display: flex; }
.log { width: 145px; background: #fff; padding: 1px 0 0 2px; box-sizing: border-box; font-size: 12px; line-height: 13.200px; color: #333; letter-spacing: -.42px; white-space: pre; overflow: hidden; }
.log-scroll { position: absolute; left: 151px; top: 100px; width: 2px; height: 18px; background: #8a8e8a; }
.cmd-input { flex: 1; background: #fff; border: 2px solid #999; font-size: 11.500px; padding: 2px 0 0 3px; letter-spacing: -.25px; color: #333; }
.tabs { height: 31px; padding: 10px 0 0 24px; box-sizing: border-box; }
.tab { display: block; width: 111px; height: 21px; box-sizing: border-box; border: 1px solid #a8b0b0; border-bottom: none; text-align: center; font: 12.500px/21px "Noto Sans", sans-serif; color: #444; background: #f0f2f0; letter-spacing: .2px; }
.params { flex: 1; padding-left: 2px; }
.par-head { height: 16px; margin-bottom: 2px; display: flex; align-items: center; background: linear-gradient(180deg, #e8eae8, #cdd0cd); border-bottom: 1px solid #aaa; box-sizing: border-box; font-size: 11px; color: #333; }
.par-grip { width: 3px; height: 8px; margin: 0 4px 0 2px; background: repeating-linear-gradient(180deg, #2a7fd0 0 3px, transparent 3px 5px); }
.par-btns { margin-left: auto; display: flex; align-items: center; gap: 8px; margin-right: 6px; }
.par-down { font-size: 9px; color: #888; }
.par-btns b { font-size: 13px; line-height: 1; }
.par-table { display: grid; grid-template-columns: 176px 178px 44px; grid-template-rows: 18px repeat(25, 16.240px); width: 398px; border-left: 1px solid #666; box-sizing: border-box; }
.ph { border: 1px solid #444; border-bottom-width: 2px; border-left-width: 0; background: #eceeec; font-weight: 700; font-size: 11.500px; line-height: 16px; text-align: center; color: #333; box-sizing: border-box; }
.pc { position: relative; border-right: 1px solid #a8aca8; border-bottom: 1px solid #a8aca8; box-sizing: border-box; font-size: 11px; line-height: 14px; color: #3c3c3c; background: #ebecea; white-space: pre; display: flex; align-items: center; }
.pc-white { background: #fafbfa; }
.pc-name { letter-spacing: .1px; }
.pc-name.lv0 { padding-left: 38px; }
.pc-name.lv1 { padding-left: 48px; }
.pc-name.lv2 { padding-left: 58px; }
.pc-name.lv3 { padding-left: 68px; }
.up { letter-spacing: -.45px; font-size: 10.500px; }
.tree-box { position: absolute; width: 11px; height: 11px; border: 1px solid #333; box-sizing: border-box; top: 2px; background: linear-gradient(#333, #333) center / 7px 1px no-repeat; }
.lv0 .tree-box { left: 10px; }
.lv1 .tree-box { left: 20px; }
.lv2 .tree-box { left: 30px; }
.plus { background: linear-gradient(#333, #333) center / 7px 1px no-repeat, linear-gradient(#333, #333) center / 1px 7px no-repeat; }
.pc-val { padding-left: 5px; font-size: 10.800px; }
.pc-edit { background: #fff; }
.pc-sel { border: 2px solid #333; background: #eceeec; }
.combo { position: absolute; right: 0; top: 0; bottom: 0; width: 14px; background: #f2f3f2; border-left: 1px solid #ccc; }
.combo::after { content: ""; position: absolute; left: 4px; top: 5px; width: 5px; height: 5px; border-right: 1px solid #999; border-bottom: 1px solid #999; transform: rotate(45deg); }
.cursor-halo { position: absolute; left: -63px; top: -5px; width: 26px; height: 26px; border-radius: 50%; background: radial-gradient(circle, rgba(240, 230, 90, .75), rgba(240, 230, 90, .25) 70%, transparent 75%); }
.pc-count { justify-content: flex-end; padding-right: 6px; }
.strong { font-weight: 700; }
.status { position: relative; height: 19px; background: #eef0ed; border-top: 3px solid #8a8e8a; box-sizing: border-box; border-bottom: 1px solid #c8ccc8; font-size: 11.500px; line-height: 14px; color: #333; }
.idle { padding-left: 3px; }
.st-green { position: absolute; left: 1405px; top: 0; width: 53px; height: 15px; background: #00e600; border: 1px solid #8a8e8a; box-sizing: border-box; }
.st-sep { position: absolute; left: 1459px; top: 0; width: 1px; height: 15px; background: #8a8e8a; }
.taskbar { height: 47px; display: flex; align-items: center; padding-left: 21px; box-sizing: border-box; background: linear-gradient(90deg, #dde8f3, #e9eff4 40%, #dce9f0 80%, #d8e6ee); }
.start { margin-right: 16px; flex: none; }
.search { width: 96px; height: 30px; border-radius: 15px; background: #f7f9fb; display: flex; align-items: center; justify-content: center; gap: 3px; font: 12.500px "Noto Sans CJK SC", sans-serif; color: #222; box-shadow: 0 1px 1px #cfd8e0; flex: none; }
.task-items { display: flex; margin-left: 4px; }
.ti { position: relative; width: 44.600px; height: 46px; display: flex; align-items: center; justify-content: center; flex: none; padding-bottom: 2px; box-sizing: border-box; }
.ti.dotted::after { content: ""; position: absolute; left: 20px; bottom: 2px; width: 5px; height: 5px; border-radius: 50%; background: #7d858c; }
.ti.on { background: #f6f8fa; border-radius: 4px; height: 40px; }
.ti.on::after { content: ""; position: absolute; left: 13px; bottom: 0; width: 18px; height: 3px; border-radius: 2px; background: #3f8f9a; }
.badge { position: absolute; left: 24px; top: 3px; width: 14px; height: 14px; border-radius: 50%; background: #c8362a; color: #fff; font: 700 9px/14px "Liberation Sans", sans-serif; text-align: center; }
.tray { position: absolute; left: 1381px; top: 1033px; height: 47px; width: 340px; color: #333; }
.tray > * { position: absolute; }
.tr-up { left: 0; top: 19px; }
.rec { left: 22px; top: 16px; width: 14px; height: 14px; border-radius: 50%; background: radial-gradient(circle, #ee2020 50%, #551010 80%); }
.tr-mic { left: 51px; top: 14px; }
.tr-zh { left: 81px; top: 13px; font: 14.500px/20px "Noto Sans CJK SC", sans-serif; }
.tr-py { left: 121px; top: 13px; font: 14.500px/20px "Noto Sans CJK SC", sans-serif; }
.tr-net { left: 157px; top: 14px; }
.tr-vol { left: 186px; top: 16px; }
.tr-date { left: 241px; top: 23px; font-size: 13px; line-height: 15px; color: #222; white-space: nowrap; }
.chat-btn { position: absolute; left: 0; top: 907px; width: 36px; height: 32px; padding: 0; border: 0; border-radius: 0 4px 4px 0; background: #b9bdb9; display: flex; align-items: center; justify-content: center; }
.meeting { position: absolute; left: 807px; top: 0; width: 115px; height: 21px; box-sizing: border-box; padding-left: 6px; display: flex; align-items: center; gap: 5px; background: #5e6360; border-radius: 0 0 4px 4px; box-shadow: 0 1px 3px #8a8e8a; font: 12px "Noto Sans CJK SC", sans-serif; color: #c5cac6; }
.m-dot { width: 8px; height: 8px; border-radius: 50%; background: #16c060; }
.m-info { width: 13px; height: 13px; margin-left: 3px; border: 1px solid #a8aca8; border-radius: 50%; font: 10px/13px "Liberation Sans", sans-serif; text-align: center; color: #a8aca8; }
.qr { position: absolute; left: 1590px; top: 946px; width: 121px; height: 121px; background: #fafafa; display: flex; align-items: center; justify-content: center; }
.qr-center { position: absolute; left: 45px; top: 44px; width: 32px; height: 32px; background: #eceef2; display: flex; align-items: center; justify-content: center; }
.g { position: absolute; background: #00d884; }
.g1 { left: 0; top: 0; width: 81px; height: 3px; }
.g2 { left: 0; top: 0; width: 3px; height: 80px; }
.g3 { right: 0; top: 0; width: 80px; height: 3px; }
.g4 { right: 0; top: 0; width: 3px; height: 80px; }
.g5 { left: 0; bottom: 0; width: 81px; height: 3px; }
.g6 { left: 0; bottom: 0; width: 3px; height: 80px; }
.g7 { right: 0; bottom: 0; width: 80px; height: 3px; }
.g8 { right: 0; bottom: 0; width: 3px; height: 80px; }
</style>
